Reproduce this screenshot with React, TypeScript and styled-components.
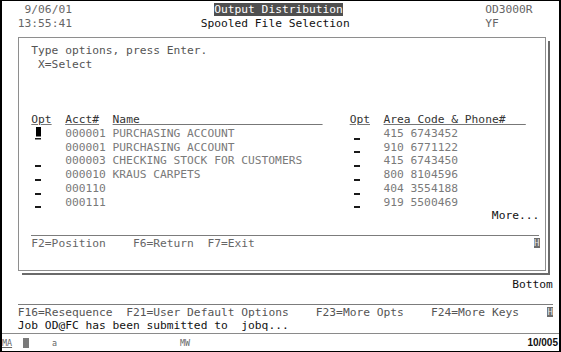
import React from 'react';
import styled, { createGlobalStyle, css } from 'styled-components';

// 5250 screen grid: 80 columns x 24 rows
const CH = 6.77;
const ROW = 13.75;

const tones = {
  faint: '#7a7a7a',
  dim: '#666666',
  mid: '#555555',
  dark: '#333333',
  ink: '#111111',
};
type Tone = keyof typeof tones;
type OptKind = 'blank' | 'field' | 'cursor';

const sp = (n: number) => ' '.repeat(n);

const GlobalStyle = createGlobalStyle`
  html, body {
    margin: 0;
    padding: 0;
    background: #fff;
  }
`;

const Terminal = styled.div`
  box-sizing: border-box;
  width: 561px;
  height: 352px;
  border: solid #000;
  border-width: 1px 2px;
  background: #fff;
  display: flex;
  flex-direction: column;
  overflow: hidden;
  font-family: 'DejaVu Sans Mono', 'Liberation Mono', monospace;
  font-size: 11.25px;
`;

const Screen = styled.div`
  flex: none;
  height: ${24 * ROW}px;
  padding: 1.15px 0 0 9px;
`;

const Line = styled.div<{ $tone?: Tone }>`
  height: ${ROW}px;
  line-height: ${ROW + 2}px;
  white-space: pre;
  color: ${(p) => tones[p.$tone ?? 'mid']};
`;

const Txt = styled.span<{ $tone?: Tone; $under?: boolean }>`
  color: ${(p) => (p.$tone ? tones[p.$tone] : 'inherit')};
  ${(p) =>
    p.$under &&
    css`
      text-decoration: underline;
      text-decoration-color: #777;
      text-decoration-thickness: 1px;
    `}
`;

const Reverse = styled.span`
  background: #4f4f4f;
  color: #fff;
`;

const HiChar = styled.span`
  display: inline-block;
  vertical-align: top;
  width: 6px;
  height: 10.5px;
  margin: 2px 0 0 1.2px;
  background: #6d6d6d;
  color: #e8e8e8;
  font-size: 9px;
  line-height: 10.5px;
  text-align: center;
`;

const OptCell = styled.span<{ $kind: OptKind }>`
  display: inline-block;
  vertical-align: top;
  width: ${2 * CH}px;
  height: ${ROW}px;
  background-repeat: no-repeat;
  ${(p) =>
    p.$kind === 'field' &&
    css`
      background-image: linear-gradient(#1a1a1a, #1a1a1a);
      background-size: 6px 2px;
      background-position: 4px 100%;
    `}
  ${(p) =>
    p.$kind === 'cursor' &&
    css`
      background-image: linear-gradient(#000, #000), linear-gradient(#1a1a1a, #1a1a1a);
      background-size: 5px 9.5px, 6px 1.5px;
      background-position: 5px 1.5px, 4px 100%;
    `}
`;

const Rule = styled.div<{ $cols: number; $indent?: number }>`
  box-sizing: border-box;
  height: ${ROW}px;
  width: ${(p) => p.$cols * CH}px;
  margin-left: ${(p) => (p.$indent ?? 0) * CH}px;
  border-bottom: 1px solid #7c7c7c;
`;

const WindowArea = styled.div`
  box-sizing: border-box;
  height: ${18 * ROW}px;
  padding: 7.4px 0 0 7px;
`;

const Window = styled.div`
  box-sizing: border-box;
  width: 528px;
  height: 234px;
  border: 1px solid #8e8e8e;
  background: #fff;
  box-shadow: 2px 2px 0 #fff, 4px 4px 0 #6a6a6a;
  padding: 5.3px 0 0 12.3px;
`;

const StatusBar = styled.div`
  flex: 1;
  margin-top: 1px;
  border-top: 1px solid #8a8a8a;
  display: flex;
  align-items: center;
  padding-right: 1px;
  font-family: 'DejaVu Sans Mono', monospace;
  font-size: 8.4px;
  color: #666;
`;

const Slot = styled.span<{ $w?: number; $gap?: number; $under?: boolean }>`
  flex: none;
  width: ${(p) => (p.$w ? `${p.$w}px` : 'auto')};
  margin-left: ${(p) => p.$gap ?? 0}px;
  ${(p) =>
    p.$under &&
    css`
      text-decoration: underline;
      text-decoration-thickness: 1px;
    `}
`;

const KeyCursor = styled.span`
  flex: none;
  width: 6px;
  height: 10px;
  background: #7a7a7a;
`;

const Position = styled.span`
  margin-left: auto;
  font-family: 'Liberation Sans', Arial, sans-serif;
  font-weight: bold;
  font-size: 10px;
  color: #111;
`;

const accounts: { opt: OptKind; acct: string; name: string; phone: string }[] = [
  { opt: 'cursor', acct: '000001', name: 'PURCHASING ACCOUNT', phone: '415 6743452' },
  { opt: 'blank', acct: '000001', name: 'PURCHASING ACCOUNT', phone: '910 6771122' },
  { opt: 'field', acct: '000003', name: 'CHECKING STOCK FOR CUSTOMERS', phone: '415 6743450' },
  { opt: 'field', acct: '000010', name: 'KRAUS CARPETS', phone: '800 8104596' },
  { opt: 'field', acct: '000110', name: '', phone: '404 3554188' },
  { opt: 'field', acct: '000111', name: '', phone: '919 5500469' },
];

const App: React.FC = () => (
  <>
    <GlobalStyle />
    <Terminal>
      <Screen>
        <Line $tone="dim">
          {'  9/06/01' + sp(21)}
          <Reverse>Output Distribution</Reverse>
          {sp(21) + 'OD3000R'}
        </Line>
        <Line $tone="dim">
          {' 13:55:41' + sp(19)}
          <Txt $tone="ink">Spooled File Selection</Txt>
          {sp(20) + 'YF'}
        </Line>

        <WindowArea>
          <Window>
            <Line>Type options, press Enter.</Line>
            <Line> X=Select</Line>
            <Line />
            <Line />
            <Line />
            <Line $tone="dark">
              <Txt $under>Opt</Txt>
              {sp(2)}
              <Txt $under>Acct#</Txt>
              {sp(2)}
              <Txt $under>{'Name'.padEnd(31)}</Txt>
              {sp(4)}
              <Txt $under>Opt</Txt>
              {sp(2)}
              <Txt $under>{'Area Code & Phone#'.padEnd(21)}</Txt>
            </Line>
            {accounts.map((a, i) => (
              <Line $tone="faint" key={i}>
                <OptCell $kind={a.opt} />
                {`${sp(3)}${a.acct} ${a.name.padEnd(35)}`}
                <OptCell $kind="field" />
                {`${sp(3)}${a.phone}`}
              </Line>
            ))}
            <Line $tone="ink">{sp(68) + 'More...'}</Line>
            <Rule $cols={75} />
            <Line $tone="dim">
              {'F2=Position' + sp(4) + 'F6=Return' + sp(2) + 'F7=Exit' + sp(41)}
              <HiChar>H</HiChar>
            </Line>
            <Line />
          </Window>
        </WindowArea>

        <Line $tone="ink">{sp(74) + 'Bottom'}</Line>
        <Rule $cols={79} $indent={1} />
        <Line>
          {' F16=Resequence  F21=User Default Options    F23=More Opts    F24=More Keys    '}
          <HiChar>H</HiChar>
        </Line>
        <Line $tone="ink"> Job OD@FC has been submitted to  jobq...</Line>
      </Screen>

      <StatusBar>
        <Slot $w={21} $under>
          MA
        </Slot>
        <KeyCursor />
        <Slot $w={128} $gap={23}>
          a
        </Slot>
        <Slot>MW</Slot>
        <Position>10/005</Position>
      </StatusBar>
    </Terminal>
  </>
);

export default App;
